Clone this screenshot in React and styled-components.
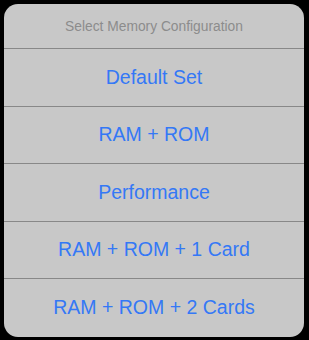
import styled, { createGlobalStyle } from "styled-components";

const GlobalStyle = createGlobalStyle`
  html, body {
    margin: 0;
    padding: 0;
    background: #000;
    height: 340px;
  }
  body {
    font-family: "Liberation Sans", Arial, sans-serif;
  }
`;

const Screen = styled.div`
  padding: 4px 5px 0 4px;
  background: #000;
  height: 340px;
  box-sizing: border-box;
`;

const Sheet = styled.div`
  background: #c8c8c8;
  border-radius: 14px;
  overflow: hidden;
  display: flex;
  flex-direction: column;
`;

const Title = styled.div`
  height: 44px;
  display: flex;
  align-items: center;
  justify-content: center;
  font-size: 13.8px;
  color: #8c8c8c;
  border-bottom: 1px solid #888;
`;

const Option = styled.button`
  box-sizing: border-box;
  height: 57.5px;
  border: none;
  background: transparent;
  font-family: inherit;
  font-size: 19.5px;
  color: #3478f6;
  display: flex;
  align-items: center;
  justify-content: center;
  padding: 0;
  border-bottom: ${(p) => (p.$last ? "none" : "1px solid #888")};
  cursor: pointer;
`;

const options = [
  "Default Set",
  "RAM + ROM",
  "Performance",
  "RAM + ROM + 1 Card",
  "RAM + ROM + 2 Cards",
];

const App = () => {
  return (
    <>
      <GlobalStyle />
      <Screen>
        <Sheet>
          <Title>Select Memory Configuration</Title>
          {options.map((label, i) => (
            <Option key={label} $last={i === options.length - 1}>
              {label}
            </Option>
          ))}
        </Sheet>
      </Screen>
    </>
  );
};

export default App;
